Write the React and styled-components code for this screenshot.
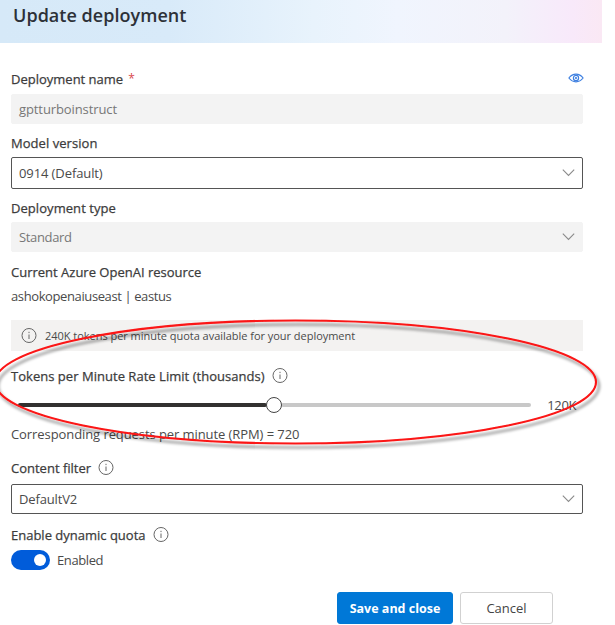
import React from "react";
import styled, { createGlobalStyle } from "styled-components";

const Global = createGlobalStyle`
  * { box-sizing: border-box; }
  body { margin: 0; background: #fff; }
`;

const Panel = styled.main`
  position: relative;
  width: 602px;
  height: 625px;
  font-family: "Open Sans", "Noto Sans", sans-serif;
  font-size: 13px;
  line-height: 18px;
  color: #4a4a4a;
`;

const Header = styled.header`
  height: 43px;
  padding: 3px 13px 0;
  background: linear-gradient(90deg, #d6e9f8 0%, #d8eaf9 28%, #e8f3fc 52%, #f0f5fe 66%, #f3f2fa 84%, #f8e9fa 95%, #fae8f4 100%);
`;

const Title = styled.h1`
  margin: 0;
  font-size: 18px;
  font-weight: 600;
  line-height: 24px;
  letter-spacing: 0.03px;
  color: #2d3138;
`;

const Form = styled.form`
  display: flex;
  flex-direction: column;
  padding: 27px 19px 0 11px;
`;

const Field = styled.section`
  display: flex;
  flex-direction: column;
  gap: ${(p) => p.$gap}px;
  margin-bottom: ${(p) => p.$after}px;
`;

const LabelRow = styled.div`
  display: flex;
  align-items: center;
  gap: ${(p) => p.$gap || 7}px;
  height: 18px;
`;

const Label = styled.label`
  -webkit-text-stroke: 0.25px #3c3c3c;
  letter-spacing: ${(p) => p.$track || 0}px;
  color: #3c3c3c;
  white-space: nowrap;
`;

const Required = styled.span`
  color: #d9484e;
  font-size: 12px;
`;

const PreviewButton = styled.span`
  display: flex;
  margin: -2px -1px 0 auto;
`;

const Control = styled.div`
  display: flex;
  align-items: center;
  justify-content: space-between;
  height: ${(p) => p.$height}px;
  padding: 0 7px;
  border-radius: 2px;
  border: 1px solid ${(p) => (p.$disabled ? "#f3f3f3" : "#555")};
  background: ${(p) => (p.$disabled ? "#f3f3f3" : "#fff")};
  color: ${(p) => (p.$disabled ? "#777" : "#4a4a4a")};
`;

const Text = styled.span`
  letter-spacing: ${(p) => p.$track || 0}px;
  white-space: nowrap;
`;

const Banner = styled.div`
  display: flex;
  align-items: center;
  gap: 8px;
  height: 31px;
  margin-bottom: 16px;
  padding: 0 10px;
  background: #f3f2f1;
  font-size: 11px;
  letter-spacing: -0.03px;
`;

const SliderRow = styled.div`
  display: flex;
  align-items: center;
  height: 16px;
  padding: 0 7px 0 7px;
`;

const Track = styled.div`
  height: 4px;
  width: ${(p) => p.$width}px;
  border-radius: 2px;
  background: ${(p) => (p.$filled ? "#323130" : "#c8c8c8")};
`;

const Thumb = styled.div`
  width: 16px;
  height: 16px;
  margin: 0 -1px;
  border: 1.5px solid #444;
  border-radius: 50%;
  background: #fff;
  z-index: 1;
`;

const SliderValue = styled.span`
  margin-left: auto;
  letter-spacing: -0.4px;
`;

const SwitchRow = styled.div`
  display: flex;
  align-items: center;
  gap: 7px;
  height: 20px;
`;

const Switch = styled.span`
  display: flex;
  align-items: center;
  justify-content: flex-end;
  width: 39px;
  height: 20px;
  padding-right: 4px;
  border-radius: 10px;
  background: #015cda;
`;

const Knob = styled.span`
  width: 12px;
  height: 12px;
  border-radius: 50%;
  background: #fff;
`;

const Footer = styled.footer`
  display: flex;
  justify-content: flex-end;
  gap: 7px;
  padding-right: 30px;
`;

const Button = styled.button`
  width: ${(p) => (p.$primary ? 116 : 93)}px;
  height: 32px;
  padding: 0;
  border: 1px solid ${(p) => (p.$primary ? "#0078d4" : "#d1d1d1")};
  border-radius: 3px;
  background: ${(p) => (p.$primary ? "#0078d7" : "#fff")};
  color: ${(p) => (p.$primary ? "#fff" : "#444")};
  font-family: inherit;
  font-size: ${(p) => (p.$primary ? 12.5 : 13)}px;
  font-weight: ${(p) => (p.$primary ? 700 : 400)};
`;

const Annotation = styled.svg`
  position: absolute;
  left: 0;
  top: 310px;
  width: 615px;
  height: 145px;
  pointer-events: none;
`;

const Info = () => (
  <svg width="16" height="16" viewBox="0 0 16 16" fill="none" stroke="#666">
    <circle cx="8" cy="7.5" r="7" />
    <path d="M8 6.500v4.500" />
    <path d="M8 3.800v1.300" />
  </svg>
);

const Chevron = () => (
  <svg width="13" height="8" viewBox="0 0 13 8" fill="none" stroke="#8a8a8a" strokeWidth="1.1">
    <path d="M0.8 .7 6.500 6.400 12.200 .7" />
  </svg>
);

const Eye = () => (
  <svg width="16" height="10" viewBox="0 0 16 10" fill="none" stroke="#3d7fe0" strokeWidth="1.2">
    <path d="M.9 5C3 2.300 5.300 1.200 8 1.200S13 2.300 15.100 5C13 7.700 10.700 8.800 8 8.800S3 7.700 .9 5Z" />
    <circle cx="8" cy="5" r="2.600" />
    <circle cx="8" cy="5" r=".5" />
  </svg>
);

export default function App() {
  return (
    <>
      <Global />
      <Panel>
        <Header>
          <Title>Update deployment</Title>
        </Header>
        <Form>
          <Field $gap={6} $after={10}>
            <LabelRow $gap={5}>
              <Label>Deployment name</Label>
              <Required>*</Required>
              <PreviewButton><Eye /></PreviewButton>
            </LabelRow>
            <Control $disabled $height={30}><Text $track={-0.1}>gptturboinstruct</Text></Control>
          </Field>
          <Field $gap={5} $after={10}>
            <LabelRow><Label $track={0.05}>Model version</Label></LabelRow>
            <Control $height={32}><Text $track={-0.1}>0914 (Default)</Text><Chevron /></Control>
          </Field>
          <Field $gap={5} $after={11}>
            <LabelRow><Label $track={0.06}>Deployment type</Label></LabelRow>
            <Control $disabled $height={30}><Text $track={-0.35}>Standard</Text><Chevron /></Control>
          </Field>
          <Field $gap={6} $after={15}>
            <LabelRow><Label>Current Azure OpenAI resource</Label></LabelRow>
            <Text $track={-0.39}>ashokopenaiuseast | eastus</Text>
          </Field>
          <Banner><Info />240K tokens per minute quota available for your deployment</Banner>
          <Field $gap={12} $after={16}>
            <LabelRow><Label $track={0.03}>Tokens per Minute Rate Limit (thousands)</Label><Info /></LabelRow>
            <SliderRow>
              <Track $filled $width={249} />
              <Thumb />
              <Track $width={250} />
              <SliderValue>120K</SliderValue>
            </SliderRow>
            <Text $track={-0.08}>Corresponding requests per minute (RPM) = 720</Text>
          </Field>
          <Field $gap={7} $after={12}>
            <LabelRow><Label>Content filter</Label><Info /></LabelRow>
            <Control $height={30}><Text $track={-0.15}>DefaultV2</Text><Chevron /></Control>
          </Field>
          <Field $gap={6} $after={22}>
            <LabelRow><Label>Enable dynamic quota</Label><Info /></LabelRow>
            <SwitchRow><Switch><Knob /></Switch><Text $track={-0.4}>Enabled</Text></SwitchRow>
          </Field>
          <Footer>
            <Button type="button" $primary>Save and close</Button>
            <Button type="button">Cancel</Button>
          </Footer>
        </Form>
        <Annotation viewBox="0 310 615 145">
          <defs>
            <filter id="shade" x="-5%" y="-10%" width="110%" height="125%">
              <feDropShadow dx="3" dy="4" stdDeviation="1.8" floodColor="#000" floodOpacity="0.45" />
            </filter>
          </defs>
          <ellipse cx="295.5" cy="382" rx="300.5" ry="61.5" fill="none" stroke="#fb1414" strokeWidth="2.1" filter="url(#shade)" />
        </Annotation>
      </Panel>
    </>
  );
}
